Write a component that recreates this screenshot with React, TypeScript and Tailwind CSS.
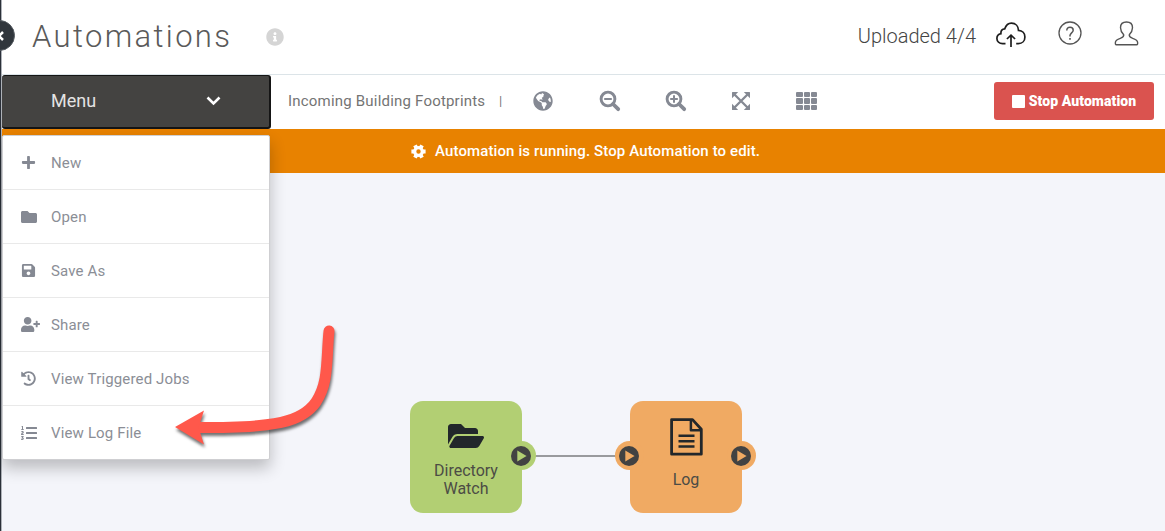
import type { ReactNode } from "react";
import {
  FaFolder,
  FaFolderOpen,
  FaGlobeAmericas,
  FaHistory,
  FaInfoCircle,
  FaListOl,
  FaPlus,
  FaSave,
  FaUserPlus,
} from "react-icons/fa";

const menuItems: { label: string; icon: ReactNode }[] = [
  { label: "New", icon: <FaPlus size={15} /> },
  { label: "Open", icon: <FaFolder size={16} /> },
  { label: "Save As", icon: <FaSave size={15} /> },
  { label: "Share", icon: <FaUserPlus size={19} /> },
  { label: "View Triggered Jobs", icon: <FaHistory size={15} /> },
  { label: "View Log File", icon: <FaListOl size={16} /> },
];

function Magnifier({ plus = false }: { plus?: boolean }) {
  return (
    <svg width="22" height="22" viewBox="0 0 22 22" fill="none" stroke="currentColor">
      <circle cx="9" cy="9" r="6.900" strokeWidth="2.900" />
      <path d="M14 14l5.200 5.200" strokeWidth="3.800" strokeLinecap="round" />
      <path d={plus ? "M5.200 9h7.600M9 5.200v7.600" : "M5.200 9h7.600"} strokeWidth="2" />
    </svg>
  );
}

function ExpandArrows() {
  return (
    <svg width="18" height="18" viewBox="0 0 18 18" fill="none">
      <path d="M2.500 2.500l13 13M15.500 2.500l-13 13" stroke="currentColor" strokeWidth="2.300" />
      <path d="M0 .6Q0 0 .6 0H6.200L0 6.200zM11.800 0h5.600q.6 0 .6.600v5.600zM0 11.800L6.200 18H.6q-.6 0-.6-.6zM18 11.800v5.600q0 .6-.6.600h-5.600z" fill="currentColor" />
    </svg>
  );
}

function GridIcon() {
  return (
    <span className="grid h-[18px] w-[21px] grid-cols-3 gap-[1px]">
      {Array.from({ length: 9 }, (_, i) => (
        <span key={i} className="rounded-[1px] bg-current" />
      ))}
    </span>
  );
}

function Gear() {
  return (
    <svg width="15" height="15" viewBox="0 0 15 15" fill="none" stroke="currentColor">
      <circle cx="7.500" cy="7.500" r="3.800" strokeWidth="3.200" />
      <path d="M.4 7.500h3M11.600 7.500h3M3.950 1.350l1.500 2.600M11.050 1.350l-1.500 2.600M3.950 13.650l1.500-2.600M11.050 13.650l-1.500-2.600" strokeWidth="3.900" />
    </svg>
  );
}

function CloudUpload() {
  return (
    <svg width="32" height="28" viewBox="0 0 32 28" fill="none" stroke="#1e1e1e" strokeWidth="1.700">
      <path d="M10.500 22.600H7.600C4.300 22.600 1.900 20.600 1.900 17.600c0-2.600 1.600-4.400 4-4.900C5.700 9.600 7.200 7.900 9.700 7.900 11 4.300 13.400 2.200 16.400 2.200c4.300 0 7 3.200 7.100 7.200 3.900.2 6.400 2.900 6.400 6.500 0 3.900-2.600 6.700-6.600 6.700h-2.100" />
      <path d="M16 26V14.200M11.900 18l4.100-3.900 4.100 3.900" />
    </svg>
  );
}

function HelpIcon() {
  return (
    <svg width="24" height="24" viewBox="0 0 24 24" fill="none" stroke="#555" strokeWidth="1.300">
      <circle cx="12" cy="12" r="11" />
      <path d="M8.800 9.400C8.800 7.400 10.100 6.200 12 6.200s3.200 1.200 3.200 3c0 2.500-3.200 2.900-3.200 5.400v.9" strokeWidth="1.500" />
      <path d="M12 17v1.700" strokeWidth="1.600" />
    </svg>
  );
}

function PersonIcon() {
  return (
    <svg width="25" height="25" viewBox="0 0 25 25" fill="none" stroke="#555" strokeWidth="1.400" strokeLinejoin="round">
      <path d="M9.700 13.700C7.900 11.800 6.500 9.500 6.500 6.700c0-3.500 2.200-5.700 6-5.700s6 2.200 6 5.700c0 2.800-1.400 5.100-3.200 7-.4 2 .8 2.700 3 3.500 3.200 1.100 5.200 1.700 5.300 4 .1 2.200-.1 2.500-.9 2.500H2.300c-.8 0-1-.3-.9-2.500.1-2.300 2.100-2.900 5.300-4 2.200-.8 3.400-1.500 3-3.500z" />
    </svg>
  );
}

function DocumentIcon() {
  return (
    <svg width="33" height="38" viewBox="0 0 33 38" fill="none" stroke="#22272b" strokeWidth="2.800" strokeLinejoin="round">
      <path d="M1.600 1.600H22.500L31.300 11.200V36.200H1.600z" />
      <path d="M20.900 2v10.200h10" strokeWidth="2.500" />
      <path d="M8.500 17.800h16M8.500 23.200h16M8.500 28.600h16" strokeWidth="2.500" />
    </svg>
  );
}

function Port({ className }: { className: string }) {
  return (
    <span className={`absolute flex h-[29px] w-[29px] items-center justify-center rounded-full ${className}`}>
      <svg width="20" height="20" viewBox="0 0 20 20">
        <circle cx="10" cy="10" r="10" fill="#424242" />
        <path d="M6.300 4.400v11.200l9.300-5.600z" fill="currentColor" />
      </svg>
    </span>
  );
}

export default function App() {
  return (
    <div className="relative flex h-[531px] w-[1165px] overflow-hidden bg-white font-['Roboto',sans-serif] text-[#555]">
      <div className="w-px shrink-0 bg-[#2b3039]" />
      <div className="w-px shrink-0 bg-[#aeb2b8]" />
      <div className="flex min-w-0 flex-1 flex-col">
        <header className="flex h-[75px] shrink-0 items-center border-b border-[#dce4e8] pl-[30px] pr-[26px]">
          <h1 className="mt-[-1px] w-[234px] text-[31px] font-[350] leading-none tracking-[2.350px] text-[#5a5a5a]">Automations</h1>
          <FaInfoCircle size={18} className="text-[#d5d5d5]" />
          <div className="ml-auto flex items-center">
            <span className="mt-[-2px] text-[20px] font-light text-[#444]">Uploaded 4/4</span>
            <span className="ml-[19px] mt-[-5px]"><CloudUpload /></span>
            <span className="ml-[31px] mt-[-8px]"><HelpIcon /></span>
            <span className="ml-[32px] mt-[-8px]"><PersonIcon /></span>
          </div>
        </header>

        <div className="flex h-[54px] shrink-0 items-center pr-[11px]">
          <button className="flex h-[54px] w-[269px] shrink-0 items-center justify-between rounded-[3px] border-2 border-l-0 border-t border-[#151515] bg-[#444341] pb-[2px] pl-[49px] pr-[48px] text-[18px] text-[#e4e4e4]">
            Menu
            <svg width="15" height="10" viewBox="0 0 15 10" fill="none" stroke="#fff" strokeWidth="2.600">
              <path d="M1.500 1.500L7.500 7.500l6-6" />
            </svg>
          </button>
          <span className="ml-[17px] mt-[-2px] w-[211px] text-[15px] tracking-[0.2px] text-[#747474]">Incoming Building Footprints</span>
          <span className="mt-[-2px] text-[13px] text-[#777]">|</span>
          <div className="ml-[31px] mt-[-2px] flex items-center text-[#858993]">
            <FaGlobeAmericas size={20} />
            <span className="ml-[46px]"><Magnifier /></span>
            <span className="ml-[44px]"><Magnifier plus /></span>
            <span className="ml-[45px]"><ExpandArrows /></span>
            <span className="ml-[46px]"><GridIcon /></span>
          </div>
          <button className="mb-[2px] ml-auto flex h-[38px] w-[160px] items-center justify-center gap-[4px] rounded-[3px] bg-[#da534f] text-[14px] font-black text-white">
            <span className="h-[13px] w-[13px] rounded-[1px] bg-white" />
            <span className="tracking-[0.080px]">Stop Automation</span>
          </button>
        </div>

        <div className="flex h-[44px] shrink-0 items-center bg-[#e88200] pl-[409px] text-[15px] font-medium text-white">
          <span className="mr-[9px]"><Gear /></span>
          <span className="tracking-[0.120px]">Automation is running. Stop Automation to edit.</span>
        </div>
        <main className="flex-1 bg-[#f4f5fa]" />
      </div>

      <span className="absolute left-[-16px] top-[20px] flex h-[31px] w-[31px] items-center justify-end rounded-full border border-[#565c62] bg-[#30363c] pr-[10px]">
        <svg width="8" height="10" viewBox="0 0 8 10" fill="none" stroke="#fff" strokeWidth="2.500">
          <path d="M7 1L3 5l4 4" />
        </svg>
      </span>

      <div className="absolute left-[534px] top-[455px] h-[2px] w-[84px] bg-[#999a9d]" />
      <div className="absolute left-[410px] top-[401px] flex h-[112px] w-[112px] flex-col items-center rounded-[13px] bg-[#b2cf73] pt-[17px]">
        <Port className="right-[-13.5px] top-[40px] bg-[#b2cf73] text-[#b2cf73]" />
        <FaFolderOpen size={36} className="text-[#22272b]" />
        <span className="mt-[8px] text-center text-[16px] leading-[18px] text-[#4c4c45]">Directory<br />Watch</span>
      </div>
      <div className="absolute left-[630px] top-[401px] flex h-[112px] w-[112px] flex-col items-center rounded-[13px] bg-[#f0aa63] pt-[17px]">
        <Port className="left-[-15.5px] top-[40px] bg-[#f0aa63] text-[#f0aa63]" />
        <Port className="right-[-13.5px] top-[40px] bg-[#f0aa63] text-[#f0aa63]" />
        <DocumentIcon />
        <span className="mt-[15px] text-[16px] leading-[18px] text-[#4c4c45]">Log</span>
      </div>

      <nav className="absolute left-[2px] top-[135px] flex h-[325px] w-[268px] flex-col divide-y divide-[#e9e9e9] rounded-[2px] border border-[#cfcfd2] bg-white shadow-[0_8px_16px_rgba(0,0,0,0.24)]">
        {menuItems.map(({ label, icon }) => (
          <a key={label} className="flex flex-1 items-center pl-[18px] text-[15px] tracking-[0.150px] text-[#8b8e96]">
            <span className="w-[30px] shrink-0 text-[#858993]">{icon}</span>
            <span className="pt-px">{label}</span>
          </a>
        ))}
      </nav>

      <svg className="absolute left-[165px] top-[315px] drop-shadow-[1px_3px_1.500px_rgba(0,0,0,0.55)]" width="185" height="140" viewBox="165 315 185 140">
        <path d="M329 331C326 361 329 382 316 402C302 422 276 428 200 427.500" fill="none" stroke="#ff584b" strokeWidth="11" strokeLinecap="round" />
        <path d="M175 427L204 410.500L198.500 427.500L204 444.500z" fill="#ff584b" />
      </svg>
    </div>
  );
}
